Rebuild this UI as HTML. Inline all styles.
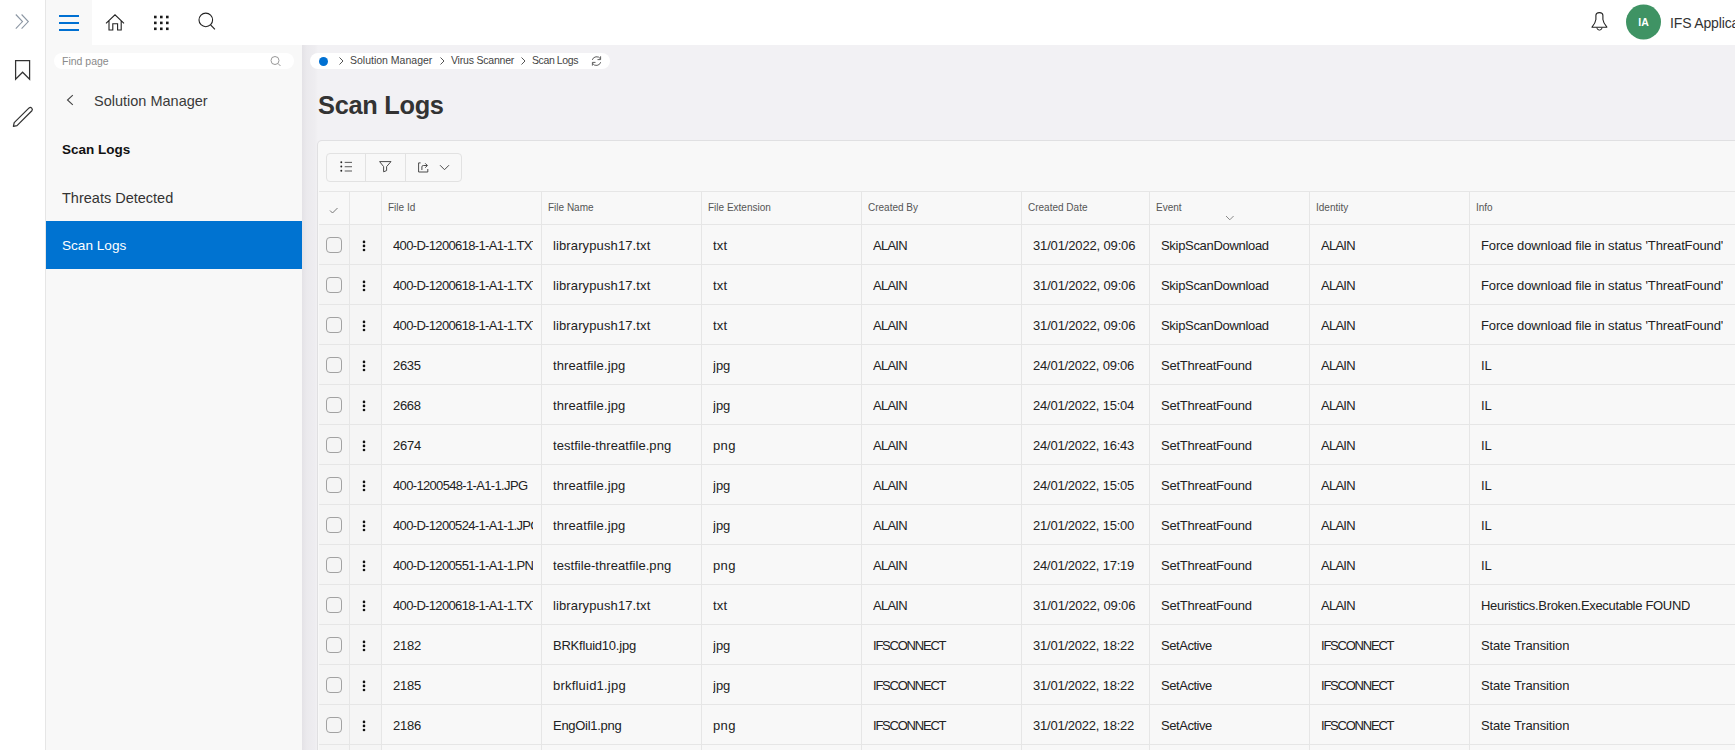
<!DOCTYPE html>
<html><head><meta charset="utf-8">
<style>
*{box-sizing:border-box;margin:0;padding:0}
html,body{width:1735px;height:750px;overflow:hidden;background:#fff;font-family:"Liberation Sans",sans-serif;color:#222}
.a{position:absolute}
#strip{left:0;top:0;width:46px;height:750px;background:#fff;border-right:1px solid #e6e6e6}
#hdr{left:46px;top:0;width:1689px;height:45px;background:#fff}
#menubtn{left:46px;top:0;width:46px;height:45px;background:#f8f8f8}
#side{left:46px;top:45px;width:256px;height:705px;background:#f8f8f8}
#content{left:302px;top:45px;width:1433px;height:705px;background:#f2f1f4;overflow:hidden}
#shadow{left:302px;top:45px;width:16px;height:705px;background:linear-gradient(to right,rgba(40,30,50,0.07),rgba(40,30,50,0.035) 30%,rgba(40,30,50,0.02) 80%,rgba(40,30,50,0))}
.t{white-space:nowrap;line-height:1}
.side-item{left:62px;font-size:14.5px;color:#333}
#sel{left:46px;top:221px;width:256px;height:48px;background:#0073d1}
#find{left:54px;top:53px;width:240px;height:16px;background:#fff;border-radius:8px}
#crumb{left:310px;top:53px;width:300px;height:16px;background:#fff;border-radius:8px}
.bc{font-size:10.5px;color:#444;top:55px}
#card{left:318px;top:141px;width:1430px;height:620px;background:#f8f8f8;border-radius:4px 0 0 0;box-shadow:0 0 0 1px rgba(0,0,0,0.06),0 0 2px rgba(0,0,0,0.05)}
#tbgrp{left:326px;top:153px;width:136px;height:29px;border:1px solid #e2e2e2;border-radius:4px;background:#f8f8f8}
.hl{height:1px;background:#e6e6e6;left:319px;width:1416px}
.vl{width:1px;background:#e6e6e6}
.hd{font-size:10px;color:#555;top:203px}
.cell{font-size:13px;color:#222;overflow:hidden;height:16px}
.up{letter-spacing:-0.8px}
.dg{letter-spacing:-0.3px}
.cb{left:326px;width:16px;height:16px;border:1px solid #a2a2a2;border-radius:4px}
.kb{left:363px;width:2.5px;height:2.5px;background:#111;border-radius:0.5px}
.tint{left:319px;width:62px;background:#f5f5f5}
</style></head><body>
<div id="strip" class="a"></div>
<div id="hdr" class="a"></div>
<div id="menubtn" class="a"></div>
<div id="side" class="a"></div>
<div id="content" class="a"></div>
<div id="shadow" class="a"></div>

<svg class="a" style="left:0;top:0" width="46" height="140" viewBox="0 0 46 140">
<g fill="none" stroke="#8c97a4" stroke-width="1.1">
<path d="M15.8 14.5 L22.5 21.6 L15.8 28.7"/><path d="M21.6 14.5 L28.3 21.6 L21.6 28.7"/>
</g>
<path d="M15.6 60.6 H29.6 V79.2 L22.6 72.2 L15.6 79.2 Z" fill="none" stroke="#333" stroke-width="1.25"/>
<path d="M13.4 126.4 L14.2 122.6 L29.1 107.9 A2 2 0 0 1 31.9 110.7 L17.0 125.6 Z" fill="none" stroke="#333" stroke-width="1.25" stroke-linejoin="round"/>
</svg>

<svg class="a" style="left:46px;top:0" width="190" height="45" viewBox="46 0 190 45">
<g stroke="#0070d2" stroke-width="2"><path d="M59 16 H79"/><path d="M59 23 H79"/><path d="M59 30 H79"/></g>
<path d="M106 23.3 L115 14.8 L124 23.3 M109 21 V30 H112.8 V23.8 H117.6 V30 H121.2 V21" fill="none" stroke="#222" stroke-width="1.1"/>
<g fill="#1a1a1a">
<rect x="154" y="15.7" width="2.6" height="2.6"/><rect x="160" y="15.7" width="2.6" height="2.6"/><rect x="166" y="15.7" width="2.6" height="2.6"/>
<rect x="154" y="21.6" width="2.6" height="2.6"/><rect x="160" y="21.6" width="2.6" height="2.6"/><rect x="166" y="21.6" width="2.6" height="2.6"/>
<rect x="154" y="27.5" width="2.6" height="2.6"/><rect x="160" y="27.5" width="2.6" height="2.6"/><rect x="166" y="27.5" width="2.6" height="2.6"/>
</g>
<circle cx="205.8" cy="19.9" r="6.8" fill="none" stroke="#222" stroke-width="1.1"/>
<path d="M210.6 24.8 L214.9 29.3" stroke="#222" stroke-width="1.2"/>
</svg>

<svg class="a" style="left:1585px;top:0" width="150" height="45" viewBox="1585 0 150 45">
<path d="M1592 27.2 Q1595.4 23.2 1595.9 19.5 V15.6 Q1595.9 12.6 1599.4 12.6 Q1602.9 12.6 1602.9 15.6 V19.5 Q1603.4 23.2 1606.9 27.2 Z" fill="none" stroke="#222" stroke-width="1.1" stroke-linejoin="round"/>
<path d="M1596.8 27.6 Q1597 30.1 1599.45 30.1 Q1601.9 30.1 1602.1 27.6" fill="none" stroke="#222" stroke-width="1"/>
<circle cx="1643.5" cy="22" r="17.5" fill="#3f9364"/>
</svg>
<div class="a t" style="left:1632px;top:17px;width:23px;text-align:center;font-size:10.5px;font-weight:bold;color:#fff">IA</div>
<div class="a t" style="left:1670px;top:15.5px;font-size:14px;letter-spacing:-0.15px;color:#333">IFS Applications</div>

<div id="find" class="a"></div>
<div class="a t" style="left:62px;top:56px;font-size:10.5px;color:#8a8a8a">Find page</div>
<svg class="a" style="left:268px;top:54px" width="16" height="14" viewBox="0 0 16 14"><circle cx="7" cy="6.5" r="4" fill="none" stroke="#999" stroke-width="1"/><path d="M10 9.5 L12.5 12" stroke="#999" stroke-width="1"/></svg>
<svg class="a" style="left:62px;top:90px" width="16" height="20" viewBox="0 0 16 20"><path d="M10.8 5.2 L5.5 10 L10.8 14.8" fill="none" stroke="#444" stroke-width="1.1"/></svg>
<div class="a t" style="left:94px;top:94px;font-size:14.5px;color:#3a3a3a">Solution Manager</div>
<div class="a t side-item" style="top:143px;font-weight:bold;font-size:13.5px;color:#111">Scan Logs</div>
<div class="a t side-item" style="top:191px">Threats Detected</div>
<div id="sel" class="a"></div>
<div class="a t side-item" style="top:239px;color:#fff;font-size:13.6px">Scan Logs</div>

<div id="crumb" class="a"></div>
<div class="a" style="left:318.5px;top:56.5px;width:9px;height:9px;border-radius:50%;background:#0070d2"></div>
<svg class="a" style="left:330px;top:53px" width="280" height="16" viewBox="330 53 280 16">
<g fill="none" stroke="#555" stroke-width="1"><path d="M339.5 57.5 L343 61 L339.5 64.5"/><path d="M440.5 57.5 L444 61 L440.5 64.5"/><path d="M521.5 57.5 L525 61 L521.5 64.5"/></g>
<g fill="none" stroke="#555" stroke-width="0.95"><path d="M592.3 59.9 A4.5 4.5 0 0 1 600.4 58.8"/><path d="M600.6 56.3 V59.6 H597.5"/><path d="M600.7 62.2 A4.5 4.5 0 0 1 592.6 63.4"/><path d="M592.4 65.6 V62.4 H595.5"/></g>
</svg>
<div class="a t bc" style="left:350px;">Solution Manager</div>
<div class="a t bc" style="left:451px;letter-spacing:-0.2px">Virus Scanner</div>
<div class="a t bc" style="left:532px;letter-spacing:-0.4px">Scan Logs</div>
<div class="a t" style="left:318px;top:92.6px;font-size:25.4px;letter-spacing:-0.3px;font-weight:bold;color:#333">Scan Logs</div>

<div id="card" class="a"></div>
<div id="tbgrp" class="a"></div>
<div class="a vl" style="left:365px;top:154px;height:27px;background:#e2e2e2"></div>
<div class="a vl" style="left:405px;top:154px;height:27px;background:#e2e2e2"></div>
<svg class="a" style="left:330px;top:150px" width="130" height="30" viewBox="330 150 130 30">
<g fill="#222"><circle cx="341.3" cy="162.3" r="0.95"/><circle cx="341.3" cy="166.5" r="0.95"/><circle cx="341.3" cy="170.7" r="0.95"/></g>
<g stroke="#666" stroke-width="1.1"><path d="M344.7 162.4 H352"/><path d="M344.7 166.7 H352"/><path d="M344.7 171 H352"/></g>
<path d="M379.6 161.6 H391 L386.6 166.6 V170.6 L383.6 171.8 V166.6 Z" fill="none" stroke="#4a4a4a" stroke-width="1" stroke-linejoin="round"/>
<path d="M420.6 162.9 H418.6 V172 H427.8 V169" fill="none" stroke="#4a4a4a" stroke-width="1"/>
<path d="M421.9 170 V166.9 Q421.9 165.5 423.3 165.5 H427.3 M425.2 163.3 L427.4 165.5 L425.2 167.7" fill="none" stroke="#4a4a4a" stroke-width="1"/>
<path d="M440 165.2 L444.5 169.7 L449 165.2" fill="none" stroke="#4a4a4a" stroke-width="1"/>
</svg>

<div class="a tint" style="top:225px;height:525px"></div>
<div class="a hl" style="top:191px"></div>
<div class="a hl" style="top:224px"></div>
<div class="a hl" style="top:264px"></div>
<div class="a hl" style="top:304px"></div>
<div class="a hl" style="top:344px"></div>
<div class="a hl" style="top:384px"></div>
<div class="a hl" style="top:424px"></div>
<div class="a hl" style="top:464px"></div>
<div class="a hl" style="top:504px"></div>
<div class="a hl" style="top:544px"></div>
<div class="a hl" style="top:584px"></div>
<div class="a hl" style="top:624px"></div>
<div class="a hl" style="top:664px"></div>
<div class="a hl" style="top:704px"></div>
<div class="a hl" style="top:744px"></div>
<div class="a hl" style="top:784px"></div>
<div class="a vl" style="left:349px;top:192px;height:560px"></div>
<div class="a vl" style="left:381px;top:192px;height:560px"></div>
<div class="a vl" style="left:541px;top:192px;height:560px"></div>
<div class="a vl" style="left:701px;top:192px;height:560px"></div>
<div class="a vl" style="left:861px;top:192px;height:560px"></div>
<div class="a vl" style="left:1021px;top:192px;height:560px"></div>
<div class="a vl" style="left:1149px;top:192px;height:560px"></div>
<div class="a vl" style="left:1309px;top:192px;height:560px"></div>
<div class="a vl" style="left:1469px;top:192px;height:560px"></div>
<svg class="a" style="left:326px;top:204px" width="14" height="14" viewBox="326 204 14 14"><path d="M330 210.5 L332.5 213 L337.5 208" fill="none" stroke="#777" stroke-width="1"/></svg>
<div class="a t hd" style="left:388px">File Id</div>
<div class="a t hd" style="left:548px">File Name</div>
<div class="a t hd" style="left:708px">File Extension</div>
<div class="a t hd" style="left:868px">Created By</div>
<div class="a t hd" style="left:1028px">Created Date</div>
<div class="a t hd" style="left:1156px">Event</div>
<div class="a t hd" style="left:1316px">Identity</div>
<div class="a t hd" style="left:1476px">Info</div>
<svg class="a" style="left:1224px;top:213px" width="12" height="10" viewBox="1224 213 12 10"><path d="M1226 216 L1229.8 219.8 L1233.6 216" fill="none" stroke="#888" stroke-width="1"/></svg>
<div class="a cb" style="top:237px"></div>
<svg class="a" style="left:360px;top:237px" width="8" height="16" viewBox="0 0 8 16"><g fill="#111"><circle cx="4" cy="4.9" r="1.3"/><circle cx="4" cy="8.9" r="1.3"/><circle cx="4" cy="13" r="1.3"/></g></svg>
<div class="a t cell" style="left:393px;top:239px;width:140px;letter-spacing:-0.66px">400-D-1200618-1-A1-1.TXT</div>
<div class="a t cell" style="left:553px;top:239px;width:140px;letter-spacing:0.12px">librarypush17.txt</div>
<div class="a t cell" style="left:713px;top:239px;width:140px;letter-spacing:0.2px">txt</div>
<div class="a t cell" style="left:873px;top:239px;width:140px;letter-spacing:-0.75px">ALAIN</div>
<div class="a t cell" style="left:1033px;top:239px;width:108px;letter-spacing:-0.15px">31/01/2022, 09:06</div>
<div class="a t cell" style="left:1161px;top:239px;width:140px;letter-spacing:-0.31px">SkipScanDownload</div>
<div class="a t cell" style="left:1321px;top:239px;width:140px;letter-spacing:-0.75px">ALAIN</div>
<div class="a t cell" style="left:1481px;top:239px;letter-spacing:-0.13px">Force download file in status &#39;ThreatFound&#39;</div>
<div class="a cb" style="top:277px"></div>
<svg class="a" style="left:360px;top:277px" width="8" height="16" viewBox="0 0 8 16"><g fill="#111"><circle cx="4" cy="4.9" r="1.3"/><circle cx="4" cy="8.9" r="1.3"/><circle cx="4" cy="13" r="1.3"/></g></svg>
<div class="a t cell" style="left:393px;top:279px;width:140px;letter-spacing:-0.66px">400-D-1200618-1-A1-1.TXT</div>
<div class="a t cell" style="left:553px;top:279px;width:140px;letter-spacing:0.12px">librarypush17.txt</div>
<div class="a t cell" style="left:713px;top:279px;width:140px;letter-spacing:0.2px">txt</div>
<div class="a t cell" style="left:873px;top:279px;width:140px;letter-spacing:-0.75px">ALAIN</div>
<div class="a t cell" style="left:1033px;top:279px;width:108px;letter-spacing:-0.15px">31/01/2022, 09:06</div>
<div class="a t cell" style="left:1161px;top:279px;width:140px;letter-spacing:-0.31px">SkipScanDownload</div>
<div class="a t cell" style="left:1321px;top:279px;width:140px;letter-spacing:-0.75px">ALAIN</div>
<div class="a t cell" style="left:1481px;top:279px;letter-spacing:-0.13px">Force download file in status &#39;ThreatFound&#39;</div>
<div class="a cb" style="top:317px"></div>
<svg class="a" style="left:360px;top:317px" width="8" height="16" viewBox="0 0 8 16"><g fill="#111"><circle cx="4" cy="4.9" r="1.3"/><circle cx="4" cy="8.9" r="1.3"/><circle cx="4" cy="13" r="1.3"/></g></svg>
<div class="a t cell" style="left:393px;top:319px;width:140px;letter-spacing:-0.66px">400-D-1200618-1-A1-1.TXT</div>
<div class="a t cell" style="left:553px;top:319px;width:140px;letter-spacing:0.12px">librarypush17.txt</div>
<div class="a t cell" style="left:713px;top:319px;width:140px;letter-spacing:0.2px">txt</div>
<div class="a t cell" style="left:873px;top:319px;width:140px;letter-spacing:-0.75px">ALAIN</div>
<div class="a t cell" style="left:1033px;top:319px;width:108px;letter-spacing:-0.15px">31/01/2022, 09:06</div>
<div class="a t cell" style="left:1161px;top:319px;width:140px;letter-spacing:-0.31px">SkipScanDownload</div>
<div class="a t cell" style="left:1321px;top:319px;width:140px;letter-spacing:-0.75px">ALAIN</div>
<div class="a t cell" style="left:1481px;top:319px;letter-spacing:-0.13px">Force download file in status &#39;ThreatFound&#39;</div>
<div class="a cb" style="top:357px"></div>
<svg class="a" style="left:360px;top:357px" width="8" height="16" viewBox="0 0 8 16"><g fill="#111"><circle cx="4" cy="4.9" r="1.3"/><circle cx="4" cy="8.9" r="1.3"/><circle cx="4" cy="13" r="1.3"/></g></svg>
<div class="a t cell" style="left:393px;top:359px;width:140px;letter-spacing:-0.33px">2635</div>
<div class="a t cell" style="left:553px;top:359px;width:140px;letter-spacing:0.11px">threatfile.jpg</div>
<div class="a t cell" style="left:713px;top:359px;width:140px;letter-spacing:0px">jpg</div>
<div class="a t cell" style="left:873px;top:359px;width:140px;letter-spacing:-0.75px">ALAIN</div>
<div class="a t cell" style="left:1033px;top:359px;width:108px;letter-spacing:-0.22px">24/01/2022, 09:06</div>
<div class="a t cell" style="left:1161px;top:359px;width:140px;letter-spacing:-0.23px">SetThreatFound</div>
<div class="a t cell" style="left:1321px;top:359px;width:140px;letter-spacing:-0.75px">ALAIN</div>
<div class="a t cell" style="left:1481px;top:359px;letter-spacing:0px">IL</div>
<div class="a cb" style="top:397px"></div>
<svg class="a" style="left:360px;top:397px" width="8" height="16" viewBox="0 0 8 16"><g fill="#111"><circle cx="4" cy="4.9" r="1.3"/><circle cx="4" cy="8.9" r="1.3"/><circle cx="4" cy="13" r="1.3"/></g></svg>
<div class="a t cell" style="left:393px;top:399px;width:140px;letter-spacing:-0.33px">2668</div>
<div class="a t cell" style="left:553px;top:399px;width:140px;letter-spacing:0.11px">threatfile.jpg</div>
<div class="a t cell" style="left:713px;top:399px;width:140px;letter-spacing:0px">jpg</div>
<div class="a t cell" style="left:873px;top:399px;width:140px;letter-spacing:-0.75px">ALAIN</div>
<div class="a t cell" style="left:1033px;top:399px;width:108px;letter-spacing:-0.22px">24/01/2022, 15:04</div>
<div class="a t cell" style="left:1161px;top:399px;width:140px;letter-spacing:-0.23px">SetThreatFound</div>
<div class="a t cell" style="left:1321px;top:399px;width:140px;letter-spacing:-0.75px">ALAIN</div>
<div class="a t cell" style="left:1481px;top:399px;letter-spacing:0px">IL</div>
<div class="a cb" style="top:437px"></div>
<svg class="a" style="left:360px;top:437px" width="8" height="16" viewBox="0 0 8 16"><g fill="#111"><circle cx="4" cy="4.9" r="1.3"/><circle cx="4" cy="8.9" r="1.3"/><circle cx="4" cy="13" r="1.3"/></g></svg>
<div class="a t cell" style="left:393px;top:439px;width:140px;letter-spacing:-0.2px">2674</div>
<div class="a t cell" style="left:553px;top:439px;width:140px;letter-spacing:0.05px">testfile-threatfile.png</div>
<div class="a t cell" style="left:713px;top:439px;width:140px;letter-spacing:0.35px">png</div>
<div class="a t cell" style="left:873px;top:439px;width:140px;letter-spacing:-0.75px">ALAIN</div>
<div class="a t cell" style="left:1033px;top:439px;width:108px;letter-spacing:-0.22px">24/01/2022, 16:43</div>
<div class="a t cell" style="left:1161px;top:439px;width:140px;letter-spacing:-0.23px">SetThreatFound</div>
<div class="a t cell" style="left:1321px;top:439px;width:140px;letter-spacing:-0.75px">ALAIN</div>
<div class="a t cell" style="left:1481px;top:439px;letter-spacing:0px">IL</div>
<div class="a cb" style="top:477px"></div>
<svg class="a" style="left:360px;top:477px" width="8" height="16" viewBox="0 0 8 16"><g fill="#111"><circle cx="4" cy="4.9" r="1.3"/><circle cx="4" cy="8.9" r="1.3"/><circle cx="4" cy="13" r="1.3"/></g></svg>
<div class="a t cell" style="left:393px;top:479px;width:140px;letter-spacing:-0.66px">400-1200548-1-A1-1.JPG</div>
<div class="a t cell" style="left:553px;top:479px;width:140px;letter-spacing:0.11px">threatfile.jpg</div>
<div class="a t cell" style="left:713px;top:479px;width:140px;letter-spacing:0px">jpg</div>
<div class="a t cell" style="left:873px;top:479px;width:140px;letter-spacing:-0.75px">ALAIN</div>
<div class="a t cell" style="left:1033px;top:479px;width:108px;letter-spacing:-0.22px">24/01/2022, 15:05</div>
<div class="a t cell" style="left:1161px;top:479px;width:140px;letter-spacing:-0.23px">SetThreatFound</div>
<div class="a t cell" style="left:1321px;top:479px;width:140px;letter-spacing:-0.75px">ALAIN</div>
<div class="a t cell" style="left:1481px;top:479px;letter-spacing:0px">IL</div>
<div class="a cb" style="top:517px"></div>
<svg class="a" style="left:360px;top:517px" width="8" height="16" viewBox="0 0 8 16"><g fill="#111"><circle cx="4" cy="4.9" r="1.3"/><circle cx="4" cy="8.9" r="1.3"/><circle cx="4" cy="13" r="1.3"/></g></svg>
<div class="a t cell" style="left:393px;top:519px;width:140px;letter-spacing:-0.66px">400-D-1200524-1-A1-1.JPG</div>
<div class="a t cell" style="left:553px;top:519px;width:140px;letter-spacing:0.11px">threatfile.jpg</div>
<div class="a t cell" style="left:713px;top:519px;width:140px;letter-spacing:0px">jpg</div>
<div class="a t cell" style="left:873px;top:519px;width:140px;letter-spacing:-0.75px">ALAIN</div>
<div class="a t cell" style="left:1033px;top:519px;width:108px;letter-spacing:-0.22px">21/01/2022, 15:00</div>
<div class="a t cell" style="left:1161px;top:519px;width:140px;letter-spacing:-0.23px">SetThreatFound</div>
<div class="a t cell" style="left:1321px;top:519px;width:140px;letter-spacing:-0.75px">ALAIN</div>
<div class="a t cell" style="left:1481px;top:519px;letter-spacing:0px">IL</div>
<div class="a cb" style="top:557px"></div>
<svg class="a" style="left:360px;top:557px" width="8" height="16" viewBox="0 0 8 16"><g fill="#111"><circle cx="4" cy="4.9" r="1.3"/><circle cx="4" cy="8.9" r="1.3"/><circle cx="4" cy="13" r="1.3"/></g></svg>
<div class="a t cell" style="left:393px;top:559px;width:140px;letter-spacing:-0.66px">400-D-1200551-1-A1-1.PNG</div>
<div class="a t cell" style="left:553px;top:559px;width:140px;letter-spacing:0.05px">testfile-threatfile.png</div>
<div class="a t cell" style="left:713px;top:559px;width:140px;letter-spacing:0.35px">png</div>
<div class="a t cell" style="left:873px;top:559px;width:140px;letter-spacing:-0.75px">ALAIN</div>
<div class="a t cell" style="left:1033px;top:559px;width:108px;letter-spacing:-0.22px">24/01/2022, 17:19</div>
<div class="a t cell" style="left:1161px;top:559px;width:140px;letter-spacing:-0.23px">SetThreatFound</div>
<div class="a t cell" style="left:1321px;top:559px;width:140px;letter-spacing:-0.75px">ALAIN</div>
<div class="a t cell" style="left:1481px;top:559px;letter-spacing:0px">IL</div>
<div class="a cb" style="top:597px"></div>
<svg class="a" style="left:360px;top:597px" width="8" height="16" viewBox="0 0 8 16"><g fill="#111"><circle cx="4" cy="4.9" r="1.3"/><circle cx="4" cy="8.9" r="1.3"/><circle cx="4" cy="13" r="1.3"/></g></svg>
<div class="a t cell" style="left:393px;top:599px;width:140px;letter-spacing:-0.66px">400-D-1200618-1-A1-1.TXT</div>
<div class="a t cell" style="left:553px;top:599px;width:140px;letter-spacing:0.12px">librarypush17.txt</div>
<div class="a t cell" style="left:713px;top:599px;width:140px;letter-spacing:0.2px">txt</div>
<div class="a t cell" style="left:873px;top:599px;width:140px;letter-spacing:-0.75px">ALAIN</div>
<div class="a t cell" style="left:1033px;top:599px;width:108px;letter-spacing:-0.15px">31/01/2022, 09:06</div>
<div class="a t cell" style="left:1161px;top:599px;width:140px;letter-spacing:-0.23px">SetThreatFound</div>
<div class="a t cell" style="left:1321px;top:599px;width:140px;letter-spacing:-0.75px">ALAIN</div>
<div class="a t cell" style="left:1481px;top:599px;letter-spacing:-0.31px">Heuristics.Broken.Executable FOUND</div>
<div class="a cb" style="top:637px"></div>
<svg class="a" style="left:360px;top:637px" width="8" height="16" viewBox="0 0 8 16"><g fill="#111"><circle cx="4" cy="4.9" r="1.3"/><circle cx="4" cy="8.9" r="1.3"/><circle cx="4" cy="13" r="1.3"/></g></svg>
<div class="a t cell" style="left:393px;top:639px;width:140px;letter-spacing:-0.2px">2182</div>
<div class="a t cell" style="left:553px;top:639px;width:140px;letter-spacing:-0.22px">BRKfluid10.jpg</div>
<div class="a t cell" style="left:713px;top:639px;width:140px;letter-spacing:0px">jpg</div>
<div class="a t cell" style="left:873px;top:639px;width:140px;letter-spacing:-1.22px">IFSCONNECT</div>
<div class="a t cell" style="left:1033px;top:639px;width:108px;letter-spacing:-0.22px">31/01/2022, 18:22</div>
<div class="a t cell" style="left:1161px;top:639px;width:140px;letter-spacing:-0.45px">SetActive</div>
<div class="a t cell" style="left:1321px;top:639px;width:140px;letter-spacing:-1.22px">IFSCONNECT</div>
<div class="a t cell" style="left:1481px;top:639px;letter-spacing:-0.13px">State Transition</div>
<div class="a cb" style="top:677px"></div>
<svg class="a" style="left:360px;top:677px" width="8" height="16" viewBox="0 0 8 16"><g fill="#111"><circle cx="4" cy="4.9" r="1.3"/><circle cx="4" cy="8.9" r="1.3"/><circle cx="4" cy="13" r="1.3"/></g></svg>
<div class="a t cell" style="left:393px;top:679px;width:140px;letter-spacing:-0.2px">2185</div>
<div class="a t cell" style="left:553px;top:679px;width:140px;letter-spacing:0.21px">brkfluid1.jpg</div>
<div class="a t cell" style="left:713px;top:679px;width:140px;letter-spacing:0px">jpg</div>
<div class="a t cell" style="left:873px;top:679px;width:140px;letter-spacing:-1.22px">IFSCONNECT</div>
<div class="a t cell" style="left:1033px;top:679px;width:108px;letter-spacing:-0.22px">31/01/2022, 18:22</div>
<div class="a t cell" style="left:1161px;top:679px;width:140px;letter-spacing:-0.45px">SetActive</div>
<div class="a t cell" style="left:1321px;top:679px;width:140px;letter-spacing:-1.22px">IFSCONNECT</div>
<div class="a t cell" style="left:1481px;top:679px;letter-spacing:-0.13px">State Transition</div>
<div class="a cb" style="top:717px"></div>
<svg class="a" style="left:360px;top:717px" width="8" height="16" viewBox="0 0 8 16"><g fill="#111"><circle cx="4" cy="4.9" r="1.3"/><circle cx="4" cy="8.9" r="1.3"/><circle cx="4" cy="13" r="1.3"/></g></svg>
<div class="a t cell" style="left:393px;top:719px;width:140px;letter-spacing:-0.2px">2186</div>
<div class="a t cell" style="left:553px;top:719px;width:140px;letter-spacing:-0.28px">EngOil1.png</div>
<div class="a t cell" style="left:713px;top:719px;width:140px;letter-spacing:0.35px">png</div>
<div class="a t cell" style="left:873px;top:719px;width:140px;letter-spacing:-1.22px">IFSCONNECT</div>
<div class="a t cell" style="left:1033px;top:719px;width:108px;letter-spacing:-0.22px">31/01/2022, 18:22</div>
<div class="a t cell" style="left:1161px;top:719px;width:140px;letter-spacing:-0.45px">SetActive</div>
<div class="a t cell" style="left:1321px;top:719px;width:140px;letter-spacing:-1.22px">IFSCONNECT</div>
<div class="a t cell" style="left:1481px;top:719px;letter-spacing:-0.13px">State Transition</div>
<div class="a cb" style="top:757px"></div>
<svg class="a" style="left:360px;top:757px" width="8" height="16" viewBox="0 0 8 16"><g fill="#111"><circle cx="4" cy="4.9" r="1.3"/><circle cx="4" cy="8.9" r="1.3"/><circle cx="4" cy="13" r="1.3"/></g></svg>
<div class="a t cell" style="left:393px;top:759px;width:140px;letter-spacing:-0.25px">2187</div>
<div class="a t cell" style="left:553px;top:759px;width:140px;letter-spacing:0px">EngOil2.png</div>
<div class="a t cell" style="left:713px;top:759px;width:140px;letter-spacing:0.35px">png</div>
<div class="a t cell" style="left:873px;top:759px;width:140px;letter-spacing:-1.22px">IFSCONNECT</div>
<div class="a t cell" style="left:1033px;top:759px;width:108px;letter-spacing:-0.22px">31/01/2022, 18:22</div>
<div class="a t cell" style="left:1161px;top:759px;width:140px;letter-spacing:-0.45px">SetActive</div>
<div class="a t cell" style="left:1321px;top:759px;width:140px;letter-spacing:-1.22px">IFSCONNECT</div>
<div class="a t cell" style="left:1481px;top:759px;letter-spacing:-0.13px">State Transition</div>
</body></html>
